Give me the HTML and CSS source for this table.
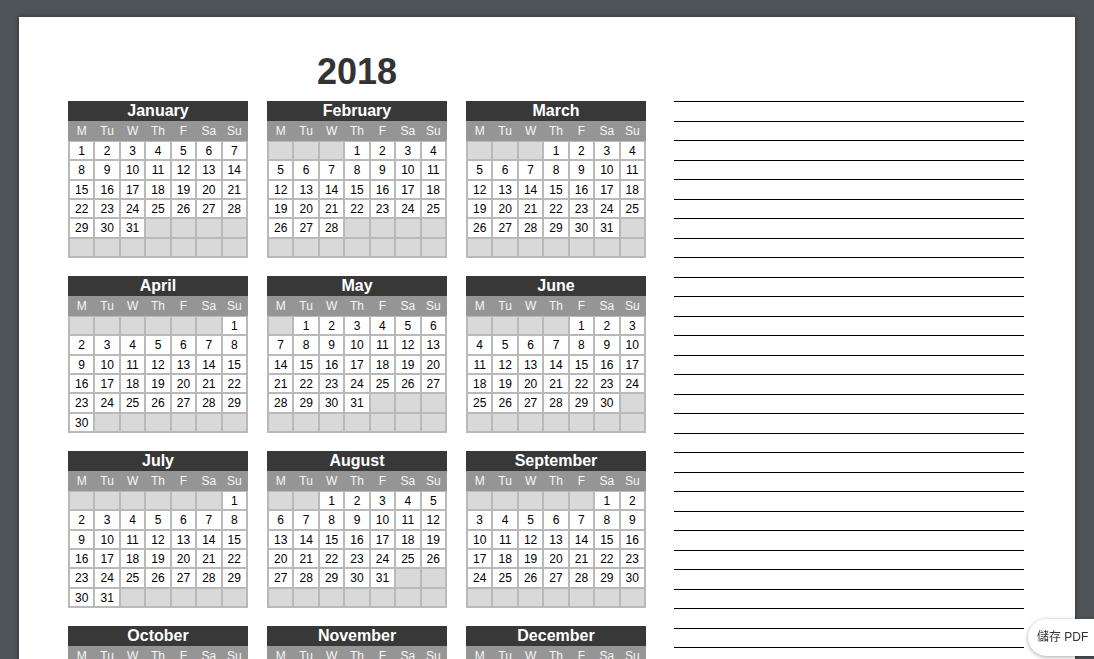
FILE: index.html
```html
<!DOCTYPE html>
<html lang="zh-Hant">
<head>
<meta charset="utf-8">
<title>2018 Calendar</title>
<link rel="stylesheet" href="styles.css">
</head>
<body>
<div class="page">
  <div class="cal">
    <div class="year">2018</div>
    <div class="months">
      <div class="month">
        <div class="month-title">January</div>
        <div class="weekdays"><span>M</span><span>Tu</span><span>W</span><span>Th</span><span>F</span><span>Sa</span><span>Su</span></div>
        <div class="days">
          <span>1</span><span>2</span><span>3</span><span>4</span><span>5</span><span>6</span><span>7</span>
          <span>8</span><span>9</span><span>10</span><span>11</span><span>12</span><span>13</span><span>14</span>
          <span>15</span><span>16</span><span>17</span><span>18</span><span>19</span><span>20</span><span>21</span>
          <span>22</span><span>23</span><span>24</span><span>25</span><span>26</span><span>27</span><span>28</span>
          <span>29</span><span>30</span><span>31</span><span class="x"></span><span class="x"></span><span class="x"></span><span class="x"></span>
          <span class="x"></span><span class="x"></span><span class="x"></span><span class="x"></span><span class="x"></span><span class="x"></span><span class="x"></span>
        </div>
      </div>
      <div class="month">
        <div class="month-title">February</div>
        <div class="weekdays"><span>M</span><span>Tu</span><span>W</span><span>Th</span><span>F</span><span>Sa</span><span>Su</span></div>
        <div class="days">
          <span class="x"></span><span class="x"></span><span class="x"></span><span>1</span><span>2</span><span>3</span><span>4</span>
          <span>5</span><span>6</span><span>7</span><span>8</span><span>9</span><span>10</span><span>11</span>
          <span>12</span><span>13</span><span>14</span><span>15</span><span>16</span><span>17</span><span>18</span>
          <span>19</span><span>20</span><span>21</span><span>22</span><span>23</span><span>24</span><span>25</span>
          <span>26</span><span>27</span><span>28</span><span class="x"></span><span class="x"></span><span class="x"></span><span class="x"></span>
          <span class="x"></span><span class="x"></span><span class="x"></span><span class="x"></span><span class="x"></span><span class="x"></span><span class="x"></span>
        </div>
      </div>
      <div class="month">
        <div class="month-title">March</div>
        <div class="weekdays"><span>M</span><span>Tu</span><span>W</span><span>Th</span><span>F</span><span>Sa</span><span>Su</span></div>
        <div class="days">
          <span class="x"></span><span class="x"></span><span class="x"></span><span>1</span><span>2</span><span>3</span><span>4</span>
          <span>5</span><span>6</span><span>7</span><span>8</span><span>9</span><span>10</span><span>11</span>
          <span>12</span><span>13</span><span>14</span><span>15</span><span>16</span><span>17</span><span>18</span>
          <span>19</span><span>20</span><span>21</span><span>22</span><span>23</span><span>24</span><span>25</span>
          <span>26</span><span>27</span><span>28</span><span>29</span><span>30</span><span>31</span><span class="x"></span>
          <span class="x"></span><span class="x"></span><span class="x"></span><span class="x"></span><span class="x"></span><span class="x"></span><span class="x"></span>
        </div>
      </div>
      <div class="month">
        <div class="month-title">April</div>
        <div class="weekdays"><span>M</span><span>Tu</span><span>W</span><span>Th</span><span>F</span><span>Sa</span><span>Su</span></div>
        <div class="days">
          <span class="x"></span><span class="x"></span><span class="x"></span><span class="x"></span><span class="x"></span><span class="x"></span><span>1</span>
          <span>2</span><span>3</span><span>4</span><span>5</span><span>6</span><span>7</span><span>8</span>
          <span>9</span><span>10</span><span>11</span><span>12</span><span>13</span><span>14</span><span>15</span>
          <span>16</span><span>17</span><span>18</span><span>19</span><span>20</span><span>21</span><span>22</span>
          <span>23</span><span>24</span><span>25</span><span>26</span><span>27</span><span>28</span><span>29</span>
          <span>30</span><span class="x"></span><span class="x"></span><span class="x"></span><span class="x"></span><span class="x"></span><span class="x"></span>
        </div>
      </div>
      <div class="month">
        <div class="month-title">May</div>
        <div class="weekdays"><span>M</span><span>Tu</span><span>W</span><span>Th</span><span>F</span><span>Sa</span><span>Su</span></div>
        <div class="days">
          <span class="x"></span><span>1</span><span>2</span><span>3</span><span>4</span><span>5</span><span>6</span>
          <span>7</span><span>8</span><span>9</span><span>10</span><span>11</span><span>12</span><span>13</span>
          <span>14</span><span>15</span><span>16</span><span>17</span><span>18</span><span>19</span><span>20</span>
          <span>21</span><span>22</span><span>23</span><span>24</span><span>25</span><span>26</span><span>27</span>
          <span>28</span><span>29</span><span>30</span><span>31</span><span class="x"></span><span class="x"></span><span class="x"></span>
          <span class="x"></span><span class="x"></span><span class="x"></span><span class="x"></span><span class="x"></span><span class="x"></span><span class="x"></span>
        </div>
      </div>
      <div class="month">
        <div class="month-title">June</div>
        <div class="weekdays"><span>M</span><span>Tu</span><span>W</span><span>Th</span><span>F</span><span>Sa</span><span>Su</span></div>
        <div class="days">
          <span class="x"></span><span class="x"></span><span class="x"></span><span class="x"></span><span>1</span><span>2</span><span>3</span>
          <span>4</span><span>5</span><span>6</span><span>7</span><span>8</span><span>9</span><span>10</span>
          <span>11</span><span>12</span><span>13</span><span>14</span><span>15</span><span>16</span><span>17</span>
          <span>18</span><span>19</span><span>20</span><span>21</span><span>22</span><span>23</span><span>24</span>
          <span>25</span><span>26</span><span>27</span><span>28</span><span>29</span><span>30</span><span class="x"></span>
          <span class="x"></span><span class="x"></span><span class="x"></span><span class="x"></span><span class="x"></span><span class="x"></span><span class="x"></span>
        </div>
      </div>
      <div class="month">
        <div class="month-title">July</div>
        <div class="weekdays"><span>M</span><span>Tu</span><span>W</span><span>Th</span><span>F</span><span>Sa</span><span>Su</span></div>
        <div class="days">
          <span class="x"></span><span class="x"></span><span class="x"></span><span class="x"></span><span class="x"></span><span class="x"></span><span>1</span>
          <span>2</span><span>3</span><span>4</span><span>5</span><span>6</span><span>7</span><span>8</span>
          <span>9</span><span>10</span><span>11</span><span>12</span><span>13</span><span>14</span><span>15</span>
          <span>16</span><span>17</span><span>18</span><span>19</span><span>20</span><span>21</span><span>22</span>
          <span>23</span><span>24</span><span>25</span><span>26</span><span>27</span><span>28</span><span>29</span>
          <span>30</span><span>31</span><span class="x"></span><span class="x"></span><span class="x"></span><span class="x"></span><span class="x"></span>
        </div>
      </div>
      <div class="month">
        <div class="month-title">August</div>
        <div class="weekdays"><span>M</span><span>Tu</span><span>W</span><span>Th</span><span>F</span><span>Sa</span><span>Su</span></div>
        <div class="days">
          <span class="x"></span><span class="x"></span><span>1</span><span>2</span><span>3</span><span>4</span><span>5</span>
          <span>6</span><span>7</span><span>8</span><span>9</span><span>10</span><span>11</span><span>12</span>
          <span>13</span><span>14</span><span>15</span><span>16</span><span>17</span><span>18</span><span>19</span>
          <span>20</span><span>21</span><span>22</span><span>23</span><span>24</span><span>25</span><span>26</span>
          <span>27</span><span>28</span><span>29</span><span>30</span><span>31</span><span class="x"></span><span class="x"></span>
          <span class="x"></span><span class="x"></span><span class="x"></span><span class="x"></span><span class="x"></span><span class="x"></span><span class="x"></span>
        </div>
      </div>
      <div class="month">
        <div class="month-title">September</div>
        <div class="weekdays"><span>M</span><span>Tu</span><span>W</span><span>Th</span><span>F</span><span>Sa</span><span>Su</span></div>
        <div class="days">
          <span class="x"></span><span class="x"></span><span class="x"></span><span class="x"></span><span class="x"></span><span>1</span><span>2</span>
          <span>3</span><span>4</span><span>5</span><span>6</span><span>7</span><span>8</span><span>9</span>
          <span>10</span><span>11</span><span>12</span><span>13</span><span>14</span><span>15</span><span>16</span>
          <span>17</span><span>18</span><span>19</span><span>20</span><span>21</span><span>22</span><span>23</span>
          <span>24</span><span>25</span><span>26</span><span>27</span><span>28</span><span>29</span><span>30</span>
          <span class="x"></span><span class="x"></span><span class="x"></span><span class="x"></span><span class="x"></span><span class="x"></span><span class="x"></span>
        </div>
      </div>
      <div class="month">
        <div class="month-title">October</div>
        <div class="weekdays"><span>M</span><span>Tu</span><span>W</span><span>Th</span><span>F</span><span>Sa</span><span>Su</span></div>
        <div class="days">
          <span>1</span><span>2</span><span>3</span><span>4</span><span>5</span><span>6</span><span>7</span>
          <span>8</span><span>9</span><span>10</span><span>11</span><span>12</span><span>13</span><span>14</span>
          <span>15</span><span>16</span><span>17</span><span>18</span><span>19</span><span>20</span><span>21</span>
          <span>22</span><span>23</span><span>24</span><span>25</span><span>26</span><span>27</span><span>28</span>
          <span>29</span><span>30</span><span>31</span><span class="x"></span><span class="x"></span><span class="x"></span><span class="x"></span>
          <span class="x"></span><span class="x"></span><span class="x"></span><span class="x"></span><span class="x"></span><span class="x"></span><span class="x"></span>
        </div>
      </div>
      <div class="month">
        <div class="month-title">November</div>
        <div class="weekdays"><span>M</span><span>Tu</span><span>W</span><span>Th</span><span>F</span><span>Sa</span><span>Su</span></div>
        <div class="days">
          <span class="x"></span><span class="x"></span><span class="x"></span><span>1</span><span>2</span><span>3</span><span>4</span>
          <span>5</span><span>6</span><span>7</span><span>8</span><span>9</span><span>10</span><span>11</span>
          <span>12</span><span>13</span><span>14</span><span>15</span><span>16</span><span>17</span><span>18</span>
          <span>19</span><span>20</span><span>21</span><span>22</span><span>23</span><span>24</span><span>25</span>
          <span>26</span><span>27</span><span>28</span><span>29</span><span>30</span><span class="x"></span><span class="x"></span>
          <span class="x"></span><span class="x"></span><span class="x"></span><span class="x"></span><span class="x"></span><span class="x"></span><span class="x"></span>
        </div>
      </div>
      <div class="month">
        <div class="month-title">December</div>
        <div class="weekdays"><span>M</span><span>Tu</span><span>W</span><span>Th</span><span>F</span><span>Sa</span><span>Su</span></div>
        <div class="days">
          <span class="x"></span><span class="x"></span><span class="x"></span><span class="x"></span><span class="x"></span><span>1</span><span>2</span>
          <span>3</span><span>4</span><span>5</span><span>6</span><span>7</span><span>8</span><span>9</span>
          <span>10</span><span>11</span><span>12</span><span>13</span><span>14</span><span>15</span><span>16</span>
          <span>17</span><span>18</span><span>19</span><span>20</span><span>21</span><span>22</span><span>23</span>
          <span>24</span><span>25</span><span>26</span><span>27</span><span>28</span><span>29</span><span>30</span>
          <span>31</span><span class="x"></span><span class="x"></span><span class="x"></span><span class="x"></span><span class="x"></span><span class="x"></span>
        </div>
      </div>
    </div>
  </div>
  <div class="notes">
    <div class="line"></div><div class="line"></div><div class="line"></div><div class="line"></div><div class="line"></div>
    <div class="line"></div><div class="line"></div><div class="line"></div><div class="line"></div><div class="line"></div>
    <div class="line"></div><div class="line"></div><div class="line"></div><div class="line"></div><div class="line"></div>
    <div class="line"></div><div class="line"></div><div class="line"></div><div class="line"></div><div class="line"></div>
    <div class="line"></div><div class="line"></div><div class="line"></div><div class="line"></div><div class="line"></div>
    <div class="line"></div><div class="line"></div><div class="line"></div><div class="line"></div><div class="line"></div>
    <div class="line"></div><div class="line"></div>
  </div>
</div>
<div class="save-pdf">儲存 PDF</div>
</body>
</html>
```

FILE: styles.css
```css
html, body {
  margin: 0;
  padding: 0;
  height: 100%;
  overflow: hidden;
}

body {
  background: #4f5458;
  font-family: "Liberation Sans", Arial, sans-serif;
}

.page {
  margin: 17px 0 0 19px;
  width: 1056px;
  height: 760px;
  box-sizing: border-box;
  padding-left: 49px;
  background: #fff;
  box-shadow: 0 0 5px rgba(0, 0, 0, 0.45);
  display: flex;
  gap: 28px;
}

.cal {
  width: 578px;
  flex: none;
}

.year {
  font-size: 36px;
  font-weight: bold;
  color: #333;
  text-align: center;
  padding-top: 34px;
  line-height: 41px;
  margin-bottom: 9px;
}

.months {
  display: grid;
  grid-template-columns: repeat(3, 180px);
  column-gap: 19px;
  row-gap: 18px;
}

.month-title {
  background: #383838;
  color: #fff;
  font-weight: bold;
  font-size: 16px;
  height: 20px;
  line-height: 20px;
  text-align: center;
}

.weekdays {
  background: #959595;
  color: #f6f6f6;
  font-size: 12px;
  height: 20px;
  display: grid;
  grid-template-columns: repeat(7, 1fr);
  column-gap: 2px;
  padding: 0 2px;
  align-items: center;
  text-align: center;
}

.days {
  background: #b9b9b9;
  display: grid;
  grid-template-columns: repeat(7, 1fr);
  grid-auto-rows: 17.33px;
  gap: 2px;
  padding: 1px 2px 2px;
}

.days span {
  background: #fff;
  color: #000;
  font-size: 12px;
  line-height: 18px;
  text-align: center;
}

.days .x {
  background: #d9d9d9;
}

.notes {
  width: 350px;
  flex: none;
  padding-top: 84px;
}

.line {
  height: 19.5px;
  box-sizing: border-box;
  border-top: 1px solid #000;
}

.save-pdf {
  position: fixed;
  left: 1028px;
  bottom: 3px;
  width: 90px;
  height: 37px;
  box-sizing: border-box;
  padding-left: 9px;
  border-radius: 19px;
  background: #fff;
  box-shadow: 0 1px 4px rgba(0, 0, 0, 0.35);
  font-family: "Liberation Sans", "Noto Sans CJK TC", sans-serif;
  font-size: 12px;
  line-height: 37px;
  color: #333;
  white-space: nowrap;
}
```
